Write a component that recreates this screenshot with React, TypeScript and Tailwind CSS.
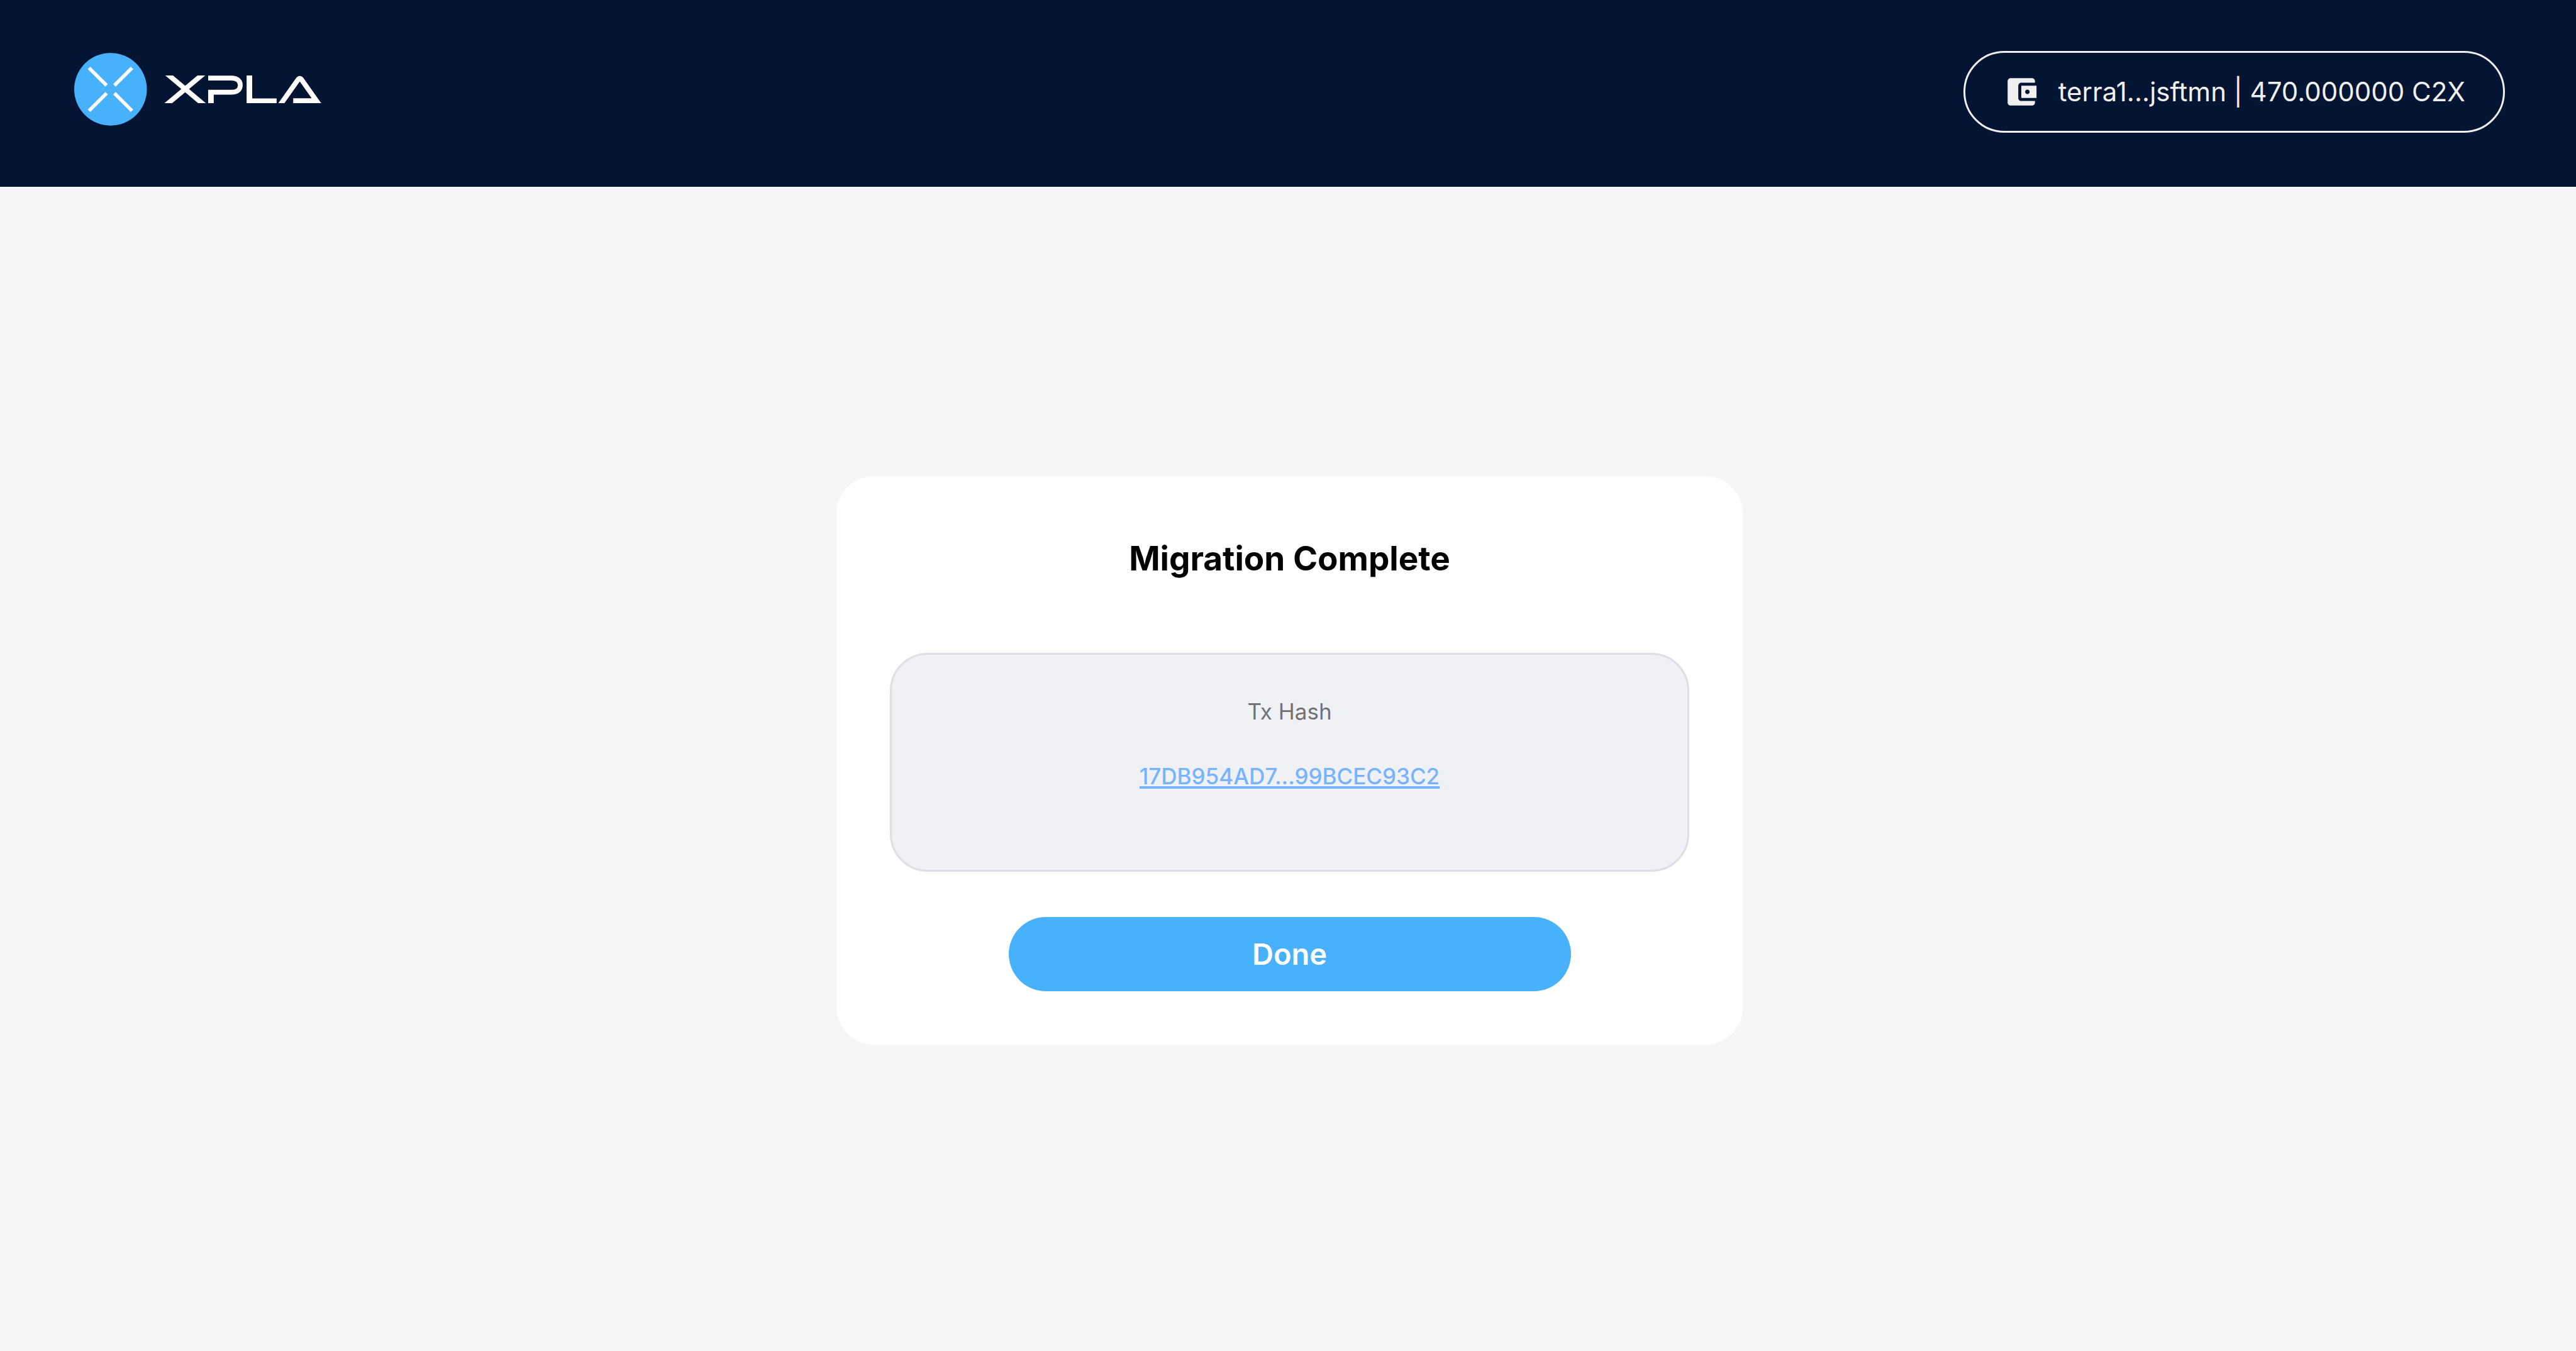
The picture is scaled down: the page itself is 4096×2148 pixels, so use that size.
function Logo() {
  return (
    <svg
      role="img"
      aria-label="XPLA"
      width="393"
      height="124"
      viewBox="23 23 577 182"
      fill="none"
      className="shrink-0"
    >
      <defs>
        <clipPath id="wordmark">
          <rect x="230" y="76" width="375" height="64.6" />
        </clipPath>
      </defs>
      <circle cx="107.8" cy="108" r="84.8" fill="#47b1fc" />
      <g stroke="#fff" strokeWidth="8.2">
        <path d="M57.6 58.2 98.6 99" />
        <path d="M157.9 58.2 116.9 99" />
        <path d="M98.6 117.2 57.6 158.2" />
        <path d="M116.9 117.2 157.9 158.2" />
      </g>
      <g stroke="#fff" strokeWidth="11.6" clipPath="url(#wordmark)">
        <path d="M233.5 66.5 333.2 150.5" />
        <path d="M331 66.5 230.6 150.5" />
        <path d="M335.7 81.8H390C403 81.8 410.7 88 410.7 98.5S403 115 390 115H335.7" strokeWidth="11.2" />
        <path d="M342.2 112V141" strokeWidth="13" />
        <path d="M432 76V141" strokeWidth="13" />
        <path d="M432 135H495.5" strokeWidth="11.4" />
        <path d="M499.6 150.5 544.8 86.6Q549.6 78.6 554.4 86.6L588.6 135H534.2" strokeMiterlimit="10" />
      </g>
    </svg>
  );
}

function WalletIcon() {
  return (
    <svg aria-hidden="true" width="58" height="58" viewBox="0 0 24 24" fill="currentColor" className="shrink-0">
      <path d="M21 18v1c0 1.1-.9 2-2 2H5c-1.11 0-2-.9-2-2V5c0-1.1.89-2 2-2h14c1.1 0 2 .9 2 2v1h-9c-1.11 0-2 .9-2 2v8c0 1.1.89 2 2 2h9zm-9-2h10V8H12v8zm4-2.5c-.83 0-1.5-.67-1.5-1.5s.67-1.5 1.5-1.5 1.5.67 1.5 1.5-.67 1.5-1.5 1.5z" />
    </svg>
  );
}

export default function App() {
  return (
    <div className="flex min-h-screen flex-col bg-[#f6f6f8] font-['Inter',sans-serif]">
      <header className="flex items-center justify-between bg-[#031532] pt-[81px] pr-[113px] pb-[86px] pl-[118px]">
        <Logo />
        <button
          type="button"
          className="flex h-[130px] items-center gap-[30px] rounded-full border-3 border-[#f0f0f0] px-[60px] text-[42px] leading-[64px] whitespace-nowrap text-[#f0f0f0]"
        >
          <WalletIcon />
          <span>terra1...jsftmn | 470.000000 C2X</span>
        </button>
      </header>

      <main className="flex flex-1 items-center justify-center pb-7 pl-[5px]">
        <section className="flex w-full max-w-[1441px] flex-col items-center rounded-[60px] bg-white px-[85px] pt-[99px] pb-[85px]">
          <h1 className="text-[53px] leading-[64px] font-bold text-black">Migration Complete</h1>
          <div className="mt-[118px] flex w-full flex-col items-center gap-[59px] rounded-[60px] border-3 border-[#dcdfe4] bg-[#f0f1f5] pt-[68px] pb-[127px] text-[35px] leading-[44px]">
            <p className="text-[#707276]">Tx Hash</p>
            <a
              href="#tx"
              className="font-medium text-[#76b4ff] underline decoration-4 underline-offset-3"
            >
              17DB954AD7...99BCEC93C2
            </a>
          </div>
          <button
            type="button"
            className="mt-[72px] h-[118px] w-full max-w-[894px] rounded-full bg-[#47b1fc] text-[47px] leading-[58px] font-semibold text-white"
          >
            Done
          </button>
        </section>
      </main>
    </div>
  );
}
